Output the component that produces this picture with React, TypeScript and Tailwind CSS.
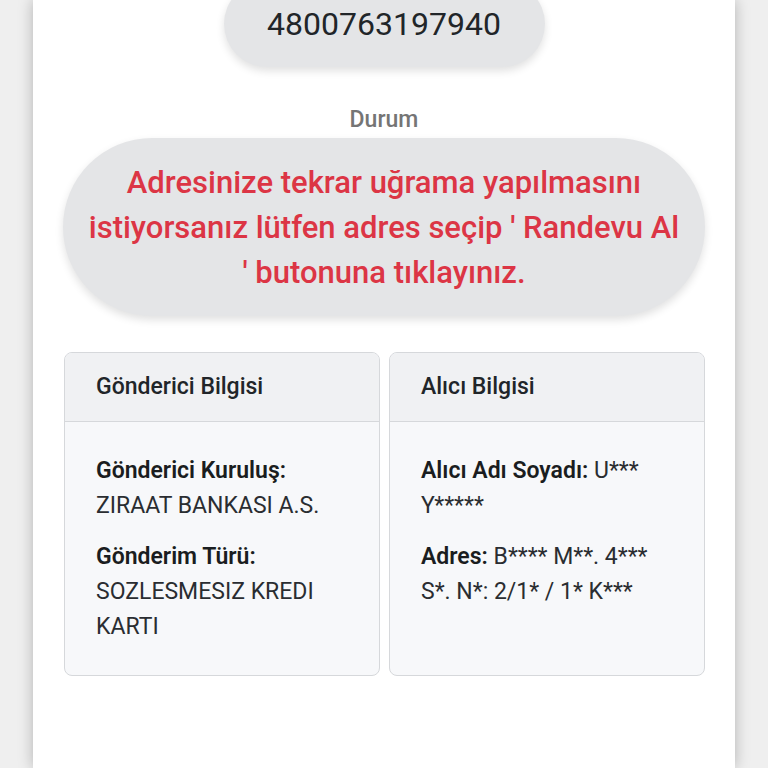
export default function App() {
  return (
    <div className="min-h-[768px] bg-[#efefef] flex justify-center overflow-hidden" style={{ fontFamily: "Roboto, 'Liberation Sans', sans-serif" }}>
      <div className="w-[702px] h-[768px] bg-white shadow-[0_0_14px_rgba(0,0,0,0.25)] px-[30px] flex flex-col items-center">
        <div className="-mt-[19px] w-[321px] h-[86px] rounded-full bg-[#e4e5e7] shadow-[0_4px_8px_rgba(0,0,0,0.12)] flex items-center justify-center">
          <span className="text-[32px] text-[#212529] font-normal">4800763197940</span>
        </div>

        <div className="mt-[38px] text-[23px] font-medium text-[#757575] leading-[30px]">Durum</div>

        <div className="mt-[3px] w-full h-[178px] rounded-full bg-[#e4e5e7] shadow-[0_4px_8px_rgba(0,0,0,0.12)] flex items-center justify-center px-[20px]">
          <p className="text-center text-[31px] leading-[45px] font-medium text-[#dc3545]">
            Adresinize tekrar uğrama yapılmasını istiyorsanız lütfen adres seçip ' Randevu Al ' butonuna tıklayınız.
          </p>
        </div>

        <div className="mt-[36px] w-full grid grid-cols-2 gap-[9px] pl-px">
          <div className="rounded-[8px] border border-[#d6d8db] bg-[#f7f8fa] overflow-hidden">
            <div className="h-[69px] bg-[#f0f1f3] border-b border-[#d6d8db] flex items-center px-[31px]">
              <span className="text-[23px] font-medium text-[#212529]">Gönderici Bilgisi</span>
            </div>
            <div className="px-[31px] pt-[31px] pb-[31px] text-[23px] leading-[35px] text-[#2a2d31]">
              <div>
                <span className="font-semibold text-[#1a1d20]">Gönderici Kuruluş:</span>
                <div>ZIRAAT BANKASI A.S.</div>
              </div>
              <div className="mt-[16px]">
                <span className="font-semibold text-[#1a1d20]">Gönderim Türü:</span>
                <div>SOZLESMESIZ KREDI KARTI</div>
              </div>
            </div>
          </div>

          <div className="rounded-[8px] border border-[#d6d8db] bg-[#f7f8fa] overflow-hidden">
            <div className="h-[69px] bg-[#f0f1f3] border-b border-[#d6d8db] flex items-center px-[31px]">
              <span className="text-[23px] font-medium text-[#212529]">Alıcı Bilgisi</span>
            </div>
            <div className="px-[31px] pt-[31px] pb-[31px] text-[23px] leading-[35px] text-[#2a2d31]">
              <div>
                <span className="font-semibold text-[#1a1d20]">Alıcı Adı Soyadı:</span> U*** Y*****
              </div>
              <div className="mt-[16px]">
                <span className="font-semibold text-[#1a1d20]">Adres:</span> B**** M**. 4*** S*. N*: 2/1* / 1* K***
              </div>
            </div>
          </div>
        </div>
      </div>
    </div>
  );
}
